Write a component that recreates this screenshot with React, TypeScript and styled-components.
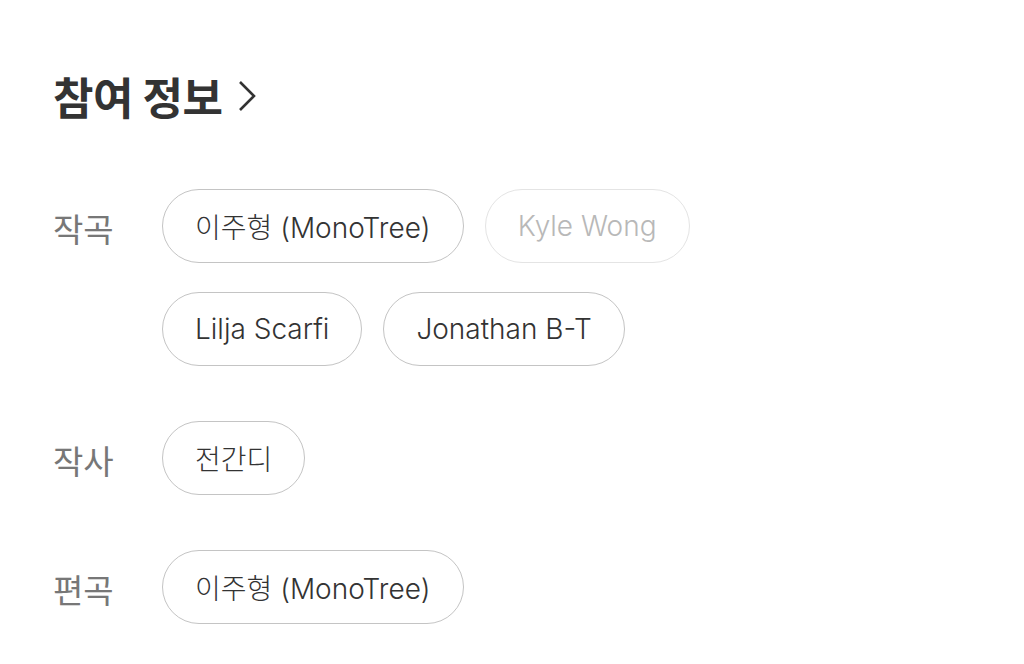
import React from "react";
import styled, { createGlobalStyle } from "styled-components";

const GlobalStyle = createGlobalStyle`
  html, body {
    margin: 0;
    padding: 0;
    background: #fff;
  }
  body {
    font-family: "Inter", "Noto Sans CJK KR", sans-serif;
    -webkit-font-smoothing: antialiased;
  }
`;

const Page = styled.div`
  padding: 68px 0 0 53px;
`;

const Heading = styled.h2`
  display: flex;
  align-items: center;
  gap: 16px;
  margin: 0 0 65px;
  font-family: "Noto Sans CJK KR", sans-serif;
  font-size: 44px;
  font-weight: 700;
  color: #333;
  letter-spacing: -0.5px;
  line-height: 56px;
`;

const Credits = styled.div`
  display: flex;
  flex-direction: column;
  gap: 55px;
`;

const Row = styled.div`
  display: flex;
  align-items: flex-start;
`;

const Label = styled.div`
  width: 109px;
  flex-shrink: 0;
  height: 74px;
  display: flex;
  align-items: center;
  padding-top: 4px;
  box-sizing: border-box;
  font-family: "Noto Sans CJK KR", sans-serif;
  font-size: 33px;
  font-weight: 400;
  color: #777;
`;

const Chips = styled.div`
  display: flex;
  flex-wrap: wrap;
  column-gap: 21px;
  row-gap: 29px;
  max-width: 560px;
`;

const Chip = styled.span<{ $muted?: boolean }>`
  display: inline-flex;
  align-items: center;
  height: 74px;
  box-sizing: border-box;
  padding: 0 32px;
  border-radius: 37px;
  border: 1.5px solid ${(p) => (p.$muted ? "#e4e4e4" : "#c4c4c4")};
  color: ${(p) => (p.$muted ? "#b8b8b8" : "#333")};
  font-size: 28px;
  font-weight: 300;
  white-space: nowrap;
`;

const Chevron = () => (
  <svg width="18" height="32" viewBox="0 0 18 32" fill="none">
    <path d="M2 2 L16 16 L2 30" stroke="#333" strokeWidth="2.6" />
  </svg>
);

type Person = { name: string; muted?: boolean };

const credits: { role: string; people: Person[] }[] = [
  {
    role: "작곡",
    people: [
      { name: "이주형 (MonoTree)" },
      { name: "Kyle Wong", muted: true },
      { name: "Lilja Scarfi" },
      { name: "Jonathan B-T" },
    ],
  },
  { role: "작사", people: [{ name: "전간디" }] },
  { role: "편곡", people: [{ name: "이주형 (MonoTree)" }] },
];

export default function App() {
  return (
    <Page>
      <GlobalStyle />
      <Heading>
        참여 정보 <Chevron />
      </Heading>
      <Credits>
        {credits.map((c) => (
          <Row key={c.role}>
            <Label>{c.role}</Label>
            <Chips>
              {c.people.map((p) => (
                <Chip key={p.name} $muted={p.muted}>
                  {p.name}
                </Chip>
              ))}
            </Chips>
          </Row>
        ))}
      </Credits>
    </Page>
  );
}
